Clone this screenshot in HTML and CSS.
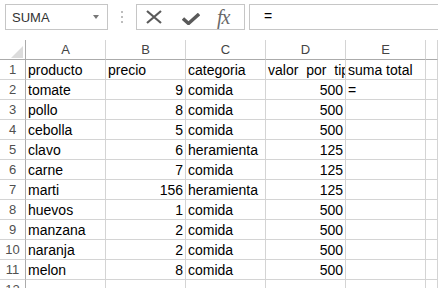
FILE: index.html
```html
<!DOCTYPE html>
<html lang="es">

<head>
  <meta charset="UTF-8" />
  <title>Libro1 - Excel</title>
  <link rel="stylesheet" href="styles.css">
</head>

<body>
  <!-- barra de formulas -->
  <div class="formula-bar">
    <div class="name-box">
      <span>SUMA</span>
      <i class="caret"></i>
    </div>
    <div class="grip"><b></b><b></b><b></b></div>
    <div class="fx-buttons">
      <svg class="ico-x" width="16" height="14" viewBox="0 0 16 14">
        <path d="M1 1 L15 13 M15 1 L1 13" stroke="#5a5a5a" stroke-width="2.2" fill="none" />
      </svg>
      <svg class="ico-ok" width="18" height="12" viewBox="0 0 18 12">
        <path d="M1 5.5 L6.5 10.5 L17 1" stroke="#5a5a5a" stroke-width="3.4" fill="none" />
      </svg>
      <span class="fx">fx</span>
    </div>
    <div class="formula-input">=</div>
  </div>

  <!-- hoja -->
  <div class="sheet">
    <div class="cell corner"><i class="tri"></i></div>
    <div class="cell col-head">A</div>
    <div class="cell col-head">B</div>
    <div class="cell col-head">C</div>
    <div class="cell col-head">D</div>
    <div class="cell col-head">E</div>
    <div class="cell col-head"></div>

    <div class="cell row-head">1</div>
    <div class="cell">producto</div>
    <div class="cell">precio</div>
    <div class="cell">categoria</div>
    <div class="cell wide">valor por tipo</div>
    <div class="cell">suma total</div>
    <div class="cell"></div>

    <div class="cell row-head">2</div>
    <div class="cell">tomate</div>
    <div class="cell num">9</div>
    <div class="cell">comida</div>
    <div class="cell num">500</div>
    <div class="cell">=</div>
    <div class="cell"></div>

    <div class="cell row-head">3</div>
    <div class="cell">pollo</div>
    <div class="cell num">8</div>
    <div class="cell">comida</div>
    <div class="cell num">500</div>
    <div class="cell"></div>
    <div class="cell"></div>

    <div class="cell row-head">4</div>
    <div class="cell">cebolla</div>
    <div class="cell num">5</div>
    <div class="cell">comida</div>
    <div class="cell num">500</div>
    <div class="cell"></div>
    <div class="cell"></div>

    <div class="cell row-head">5</div>
    <div class="cell">clavo</div>
    <div class="cell num">6</div>
    <div class="cell">heramienta</div>
    <div class="cell num">125</div>
    <div class="cell"></div>
    <div class="cell"></div>

    <div class="cell row-head">6</div>
    <div class="cell">carne</div>
    <div class="cell num">7</div>
    <div class="cell">comida</div>
    <div class="cell num">125</div>
    <div class="cell"></div>
    <div class="cell"></div>

    <div class="cell row-head">7</div>
    <div class="cell">marti</div>
    <div class="cell num">156</div>
    <div class="cell">heramienta</div>
    <div class="cell num">125</div>
    <div class="cell"></div>
    <div class="cell"></div>

    <div class="cell row-head">8</div>
    <div class="cell">huevos</div>
    <div class="cell num">1</div>
    <div class="cell">comida</div>
    <div class="cell num">500</div>
    <div class="cell"></div>
    <div class="cell"></div>

    <div class="cell row-head">9</div>
    <div class="cell">manzana</div>
    <div class="cell num">2</div>
    <div class="cell">comida</div>
    <div class="cell num">500</div>
    <div class="cell"></div>
    <div class="cell"></div>

    <div class="cell row-head">10</div>
    <div class="cell">naranja</div>
    <div class="cell num">2</div>
    <div class="cell">comida</div>
    <div class="cell num">500</div>
    <div class="cell"></div>
    <div class="cell"></div>

    <div class="cell row-head">11</div>
    <div class="cell">melon</div>
    <div class="cell num">8</div>
    <div class="cell">comida</div>
    <div class="cell num">500</div>
    <div class="cell"></div>
    <div class="cell"></div>

    <div class="cell row-head">12</div>
    <div class="cell"></div>
    <div class="cell"></div>
    <div class="cell"></div>
    <div class="cell"></div>
    <div class="cell"></div>
    <div class="cell"></div>
  </div>
</body>

</html>
```

FILE: styles.css
```css
* {
  padding: 0;
  margin: 0;
  box-sizing: border-box;
}

body {
  background: #fff;
  font-family: "Liberation Sans", Arial, sans-serif;
  color: #000;
  overflow: hidden;
}

/* barra de formulas */
.formula-bar {
  display: flex;
  align-items: center;
  height: 26px;
  margin: 4px 0 10px;
  padding-left: 5px;
}

.name-box {
  display: flex;
  align-items: center;
  width: 103px;
  height: 26px;
  border: 1px solid #c6c6c6;
  padding-left: 6px;
  font-size: 13px;
  color: #333;
}

.caret {
  margin-left: auto;
  margin-right: 8px;
  width: 0;
  height: 0;
  border-left: 3.5px solid transparent;
  border-right: 3.5px solid transparent;
  border-top: 4px solid #777;
}

.grip {
  display: flex;
  flex-direction: column;
  gap: 3px;
  margin-left: 13px;
}

.grip b {
  width: 2px;
  height: 2px;
  background: #bdbdbd;
}

.fx-buttons {
  display: flex;
  align-items: center;
  width: 109px;
  height: 26px;
  margin-left: 13px;
  border: 1px solid #c6c6c6;
  padding-left: 9px;
}

.ico-ok {
  margin-left: 20px;
  margin-top: 4px;
}

.fx {
  margin-left: 17px;
  font-family: "Liberation Serif", "Times New Roman", serif;
  font-style: italic;
  font-size: 20px;
  color: #6a6a6a;
  letter-spacing: -1px;
}

.formula-input {
  flex: 1;
  height: 26px;
  margin-left: 4px;
  margin-right: -2px;
  border: 1px solid #c6c6c6;
  padding-left: 14px;
  line-height: 23px;
  font-size: 14px;
}

/* hoja */
.sheet {
  display: grid;
  grid-template-columns: 26px repeat(5, 80px) 1fr;
  grid-auto-rows: 20px;
}

.cell {
  border-right: 1px solid #d4d4d4;
  border-bottom: 1px solid #d4d4d4;
  padding: 0 2px;
  font-size: 14px;
  line-height: 20px;
  white-space: pre;
  overflow: hidden;
}

.cell.num {
  text-align: right;
}

.cell.wide {
  word-spacing: 4px;
}

.col-head {
  border-bottom-color: #ababab;
  text-align: center;
  font-size: 13px;
  color: #444;
  line-height: 19px;
}

.row-head {
  border-right-color: #ababab;
  text-align: center;
  font-size: 13px;
  color: #505050;
  padding: 0;
}

.corner {
  display: flex;
  align-items: flex-end;
  justify-content: flex-end;
  border-right-color: #ababab;
  border-bottom-color: #ababab;
  padding: 0 2px 1px 0;
}

.tri {
  width: 0;
  height: 0;
  border-left: 12px solid transparent;
  border-bottom: 12px solid #dcdcdc;
}
```
